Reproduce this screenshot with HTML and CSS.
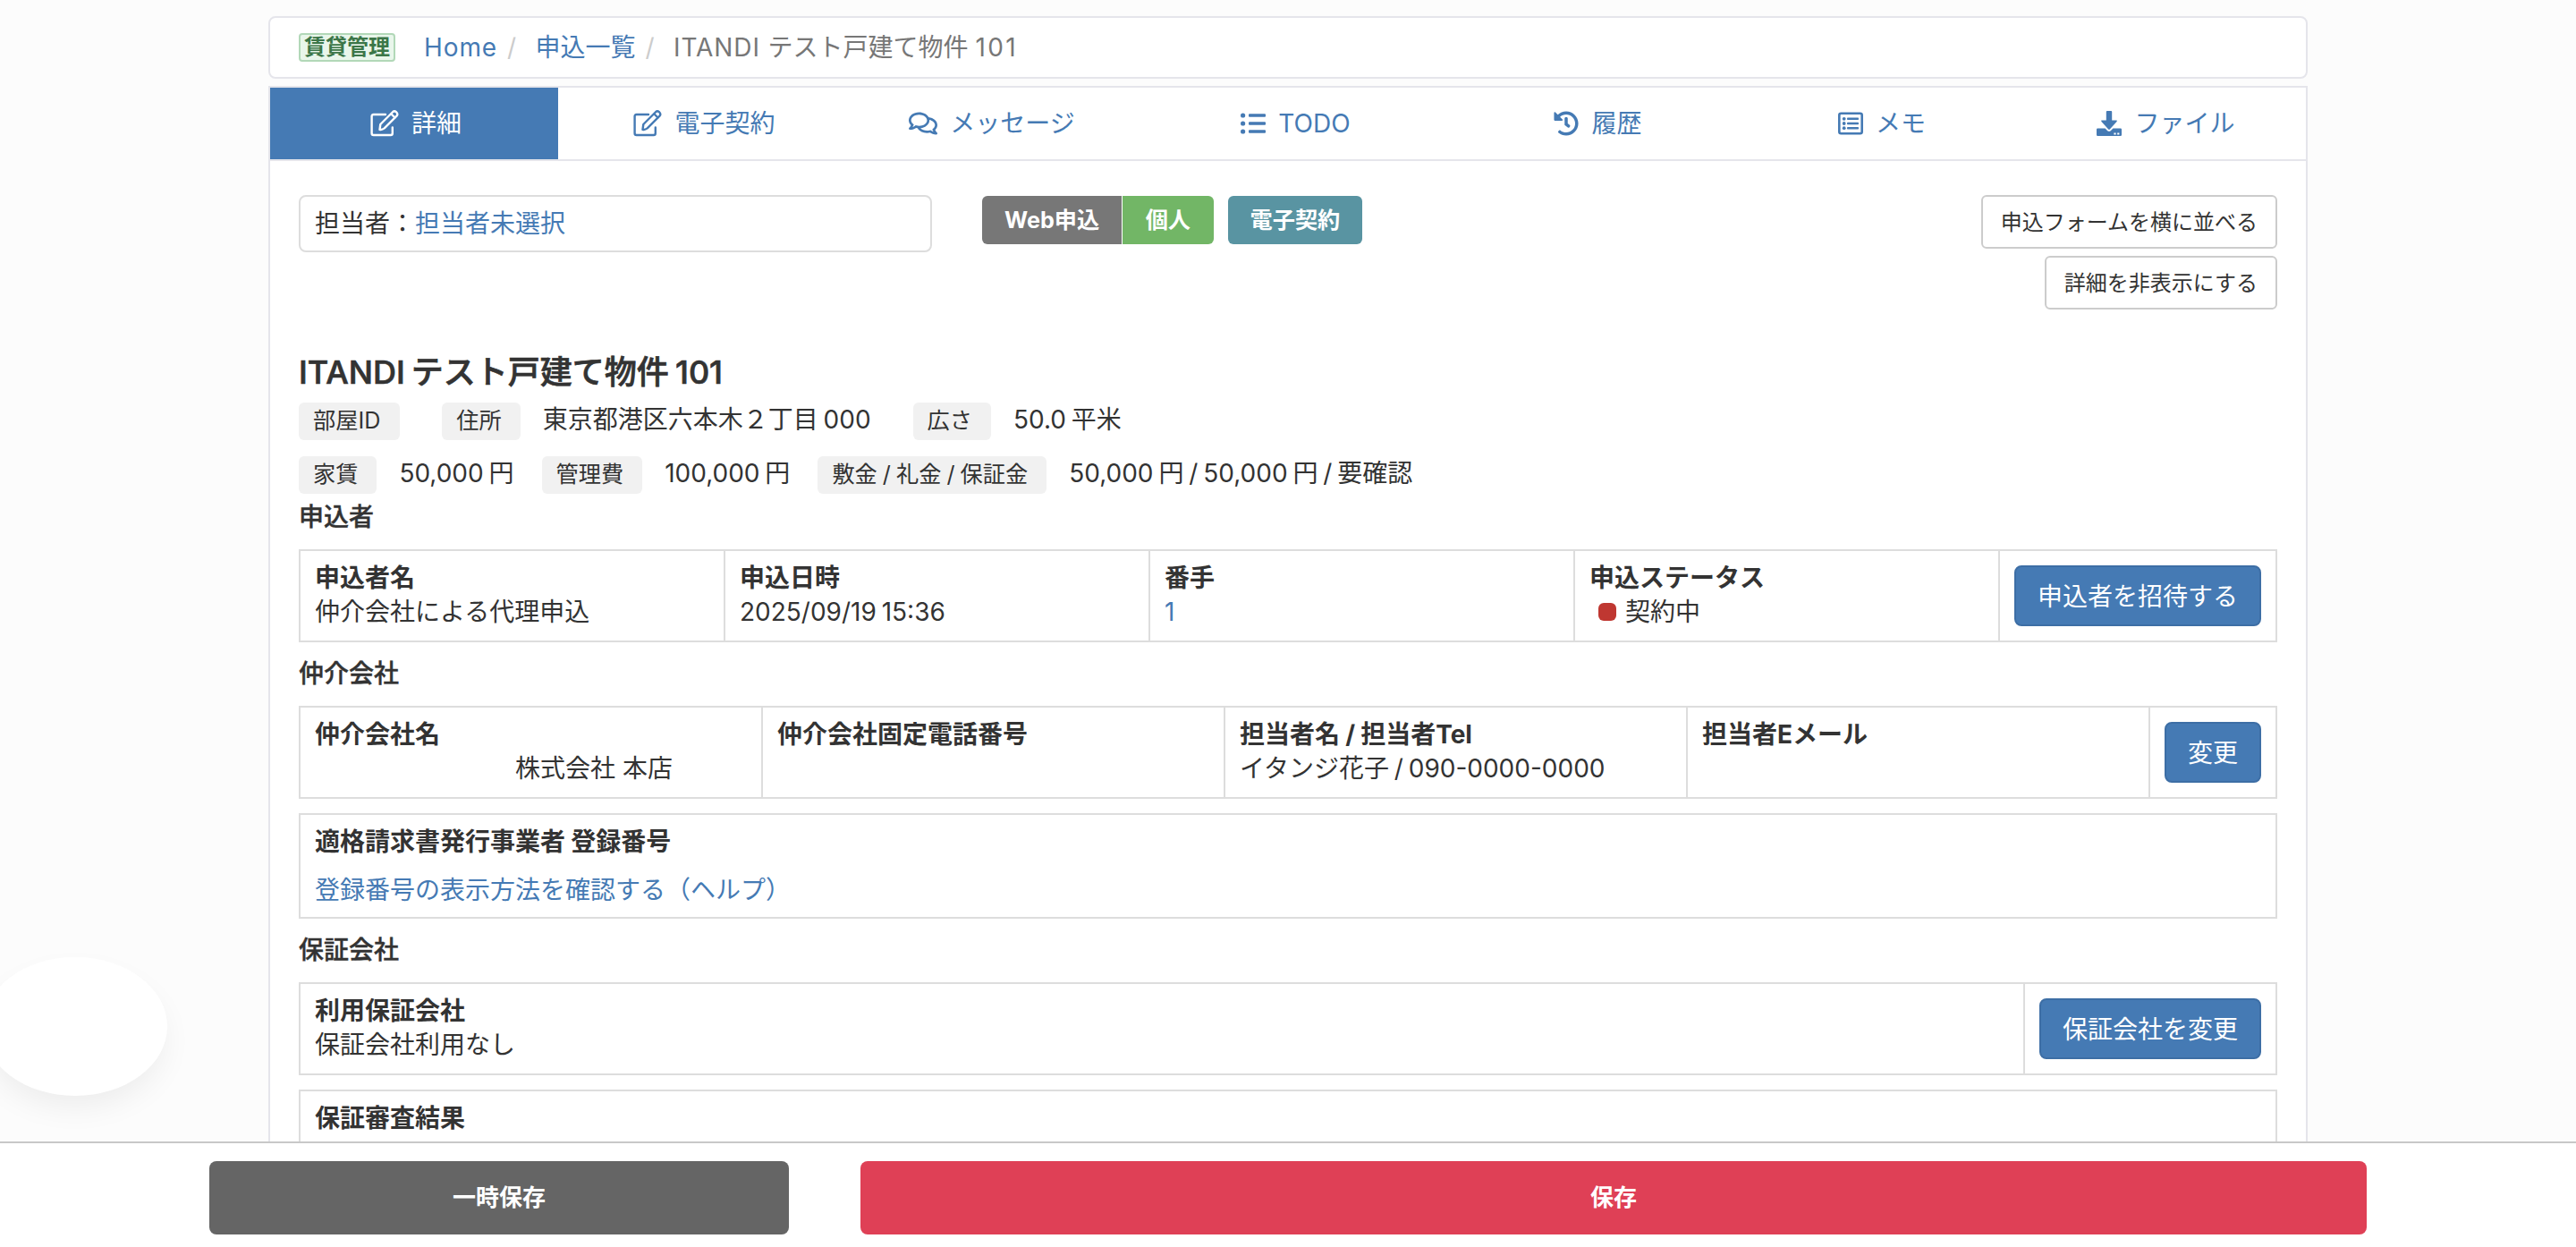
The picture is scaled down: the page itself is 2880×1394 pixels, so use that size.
FILE: index.html
```
<!DOCTYPE html>
<html lang="ja">
<head>
<meta charset="utf-8">
<title>ITANDI テスト戸建て物件 101</title>
<link rel="stylesheet" href="styles.css">
</head>
<body>
<svg width="0" height="0" class="sprite" aria-hidden="true">
  <symbol id="i-edit" viewBox="0 0 32 32">
    <g fill="none" stroke="currentColor" stroke-width="2.4" stroke-linejoin="round" stroke-linecap="round">
      <path d="M17 6H3.600Q1.600 6 1.600 8V27Q1.600 29 3.600 29H22.800Q24.800 29 24.800 27V20.500"/>
      <path d="M10.500 22.800 11.300 17 25.300 3Q27 1.500 28.900 3.200 31.200 5.300 29.700 7.400L15.700 21.400Q13 23.500 10.500 22.800Z"/>
      <path d="M23.500 5.500 27.500 9.500"/>
    </g>
  </symbol>
  <symbol id="i-chat" viewBox="0 0 576 512"><path fill="currentColor" d="M532 386.200c27.500-27.100 44-61.100 44-98.200 0-80-76.500-146.100-176.200-157.900C368.300 72.500 294.300 32 208 32 93.100 32 0 103.600 0 192c0 37 16.500 71 44 98.200-15.300 30.700-37.300 54.500-37.700 54.900-6.300 6.700-8.100 16.500-4.400 25 3.600 8.500 12 14 21.200 14 53.500 0 96.700-20.200 125.200-38.800 9.200 2.100 18.700 3.700 28.400 4.900C208.100 407.600 281.800 448 368 448c20.800 0 40.800-2.400 59.800-6.800C456.300 459.700 499.400 480 553 480c9.200 0 17.500-5.500 21.200-14 3.600-8.500 1.900-18.300-4.400-25-.4-.3-22.500-24.100-37.800-54.800zm-392.800-92.300L122.100 305c-14.100 9.100-28.500 16.300-43.100 21.400 2.700-4.700 5.400-9.700 8-14.800l15.500-31.100L77.700 256C64.200 242.600 48 220.700 48 192c0-60.700 73.300-112 160-112s160 51.300 160 112-73.300 112-160 112c-16.500 0-33-1.900-49-5.600l-19.800-4.500zM498.300 352l-24.700 24.400 15.500 31.100c2.600 5.100 5.300 10.100 8 14.800-14.600-5.100-29-12.300-43.100-21.400l-17.100-11.100-19.900 4.600c-16 3.700-32.500 5.600-49 5.600-54 0-102.200-20.100-131.300-49.700C338 339.500 416 272.900 416 192c0-3.400-.4-6.700-.7-10C479.700 196.500 528 238.800 528 288c0 28.700-16.200 50.600-29.700 64z"/></symbol>
  <symbol id="i-list" viewBox="0 0 28 28"><g fill="currentColor"><rect x="9" y="3.200" width="19" height="3.600" rx="1"/><rect x="9" y="12.200" width="19" height="3.600" rx="1"/><rect x="9" y="21.200" width="19" height="3.600" rx="1"/><circle cx="2.600" cy="5" r="2.600"/><circle cx="2.600" cy="14" r="2.600"/><circle cx="2.600" cy="23" r="2.600"/></g></symbol>
  <symbol id="i-history" viewBox="0 0 512 512"><path fill="currentColor" d="M504 255.500c.3 136.600-111.200 248.400-247.800 248.500-59 0-113.200-20.500-155.800-54.900-11.100-8.900-11.900-25.500-1.800-35.600l11.300-11.300c8.600-8.600 22.400-9.600 31.900-2C173.100 425.100 212.800 440 256 440c101.700 0 184-82.300 184-184 0-101.700-82.300-184-184-184-48.800 0-93.100 19-126.100 49.900l50.800 50.800c10.100 10.100 2.900 27.300-11.300 27.300H24c-8.800 0-16-7.200-16-16V38.600c0-14.300 17.200-21.400 27.300-11.300l49.400 49.400C129.200 34.100 189.600 8 256 8c136.800 0 247.700 110.800 248 247.500zm-180.900 78.800 9.800-12.600c8.100-10.500 6.300-25.500-4.200-33.700L288 256.300V152c0-13.300-10.700-24-24-24h-16c-13.300 0-24 10.700-24 24v135.700l65.400 50.900c10.500 8.100 25.500 6.300 33.700-4.300z"/></symbol>
  <symbol id="i-memo" viewBox="0 0 28 28"><rect x="1.300" y="2.800" width="25.400" height="22.400" rx="2" fill="none" stroke="currentColor" stroke-width="2.600"/><g fill="currentColor"><rect x="10" y="7.500" width="13" height="2.600" rx=".8"/><rect x="10" y="12.700" width="13" height="2.600" rx=".8"/><rect x="10" y="17.900" width="13" height="2.600" rx=".8"/><circle cx="6.700" cy="8.800" r="1.900"/><circle cx="6.700" cy="14" r="1.900"/><circle cx="6.700" cy="19.200" r="1.900"/></g></symbol>
  <symbol id="i-download" viewBox="0 0 28 28"><g fill="currentColor"><path d="M10.800 1Q10.800 0 11.800 0H16.200Q17.200 0 17.200 1V10.600H22Q23.600 10.600 22.500 11.900L14.800 20.500Q14 21.300 13.200 20.500L5.500 11.900Q4.400 10.600 6 10.600H10.800Z"/><path fill-rule="evenodd" d="M1.200 19.600H9.600L12 22Q14 23.700 16 22L18.400 19.600H26.800Q28 19.600 28 20.800V26.800Q28 28 26.800 28H1.200Q0 28 0 26.800V20.800Q0 19.600 1.200 19.600ZM19.400 24.400H21.600V26.400H19.400ZM23.200 24.400H25.400V26.400H23.200Z"/></g></symbol>
</svg>

<nav class="breadcrumb">
  <span class="tag-green">賃貸管理</span>
  <a class="latin">Home</a><span class="sep">/</span><a>申込一覧</a><span class="sep">/</span><span class="crumb-current"><span class="latin">ITANDI </span>テスト戸建て物件 <span class="digits">101</span></span>
</nav>

<main class="panel">
  <nav class="tabs">
    <a class="tab active"><svg class="icon icon-wide"><use href="#i-edit"/></svg>詳細</a>
    <a class="tab"><svg class="icon icon-wide"><use href="#i-edit"/></svg>電子契約</a>
    <a class="tab"><svg class="icon icon-wide"><use href="#i-chat"/></svg>メッセージ</a>
    <a class="tab"><svg class="icon"><use href="#i-list"/></svg>TODO</a>
    <a class="tab"><svg class="icon"><use href="#i-history"/></svg>履歴</a>
    <a class="tab"><svg class="icon"><use href="#i-memo"/></svg>メモ</a>
    <a class="tab"><svg class="icon"><use href="#i-download"/></svg>ファイル</a>
  </nav>
  <div class="content">
    <div class="top-row">
      <div class="assignee">担当者：<a>担当者未選択</a></div>
      <div class="labels">
        <span class="label gray">Web申込</span>
        <span class="label green">個人</span>
        <span class="label teal">電子契約</span>
      </div>
      <div class="actions">
        <button class="btn-outline">申込フォームを横に並べる</button>
        <button class="btn-outline">詳細を非表示にする</button>
      </div>
    </div>

    <h1 class="title">ITANDI テスト戸建て物件 101</h1>
    <div class="facts first">
      <span class="key room">部屋ID</span>
      <span class="key">住所</span><span class="val address">東京都港区六本木２丁目 000</span>
      <span class="key">広さ</span><span class="val">50.0 平米</span>
    </div>
    <div class="facts second">
      <span class="key">家賃</span><span class="val">50,000 円</span>
      <span class="key">管理費</span><span class="val">100,000 円</span>
      <span class="key">敷金 / 礼金 / 保証金</span><span class="val">50,000 円 / 50,000 円 / 要確認</span>
    </div>

    <h2 class="section first-section">申込者</h2>
    <div class="grid-box">
      <div class="cell"><b>申込者名</b><span>仲介会社による代理申込</span></div>
      <div class="cell"><b>申込日時</b><span>2025/09/19 15:36</span></div>
      <div class="cell"><b>番手</b><a>1</a></div>
      <div class="cell"><b>申込ステータス</b><span class="status"><i class="dot"></i>契約中</span></div>
      <div class="cell-action"><button class="btn">申込者を招待する</button></div>
    </div>

    <h2 class="section">仲介会社</h2>
    <div class="grid-box">
      <div class="cell"><b>仲介会社名</b><span class="company">株式会社 本店</span></div>
      <div class="cell"><b>仲介会社固定電話番号</b></div>
      <div class="cell"><b>担当者名 / 担当者Tel</b><span>イタンジ花子 / 090-0000-0000</span></div>
      <div class="cell"><b>担当者Eメール</b></div>
      <div class="cell-action"><button class="btn">変更</button></div>
    </div>
    <div class="grid-box invoice">
      <div class="cell"><b>適格請求書発行事業者 登録番号</b><a>登録番号の表示方法を確認する（ヘルプ）</a></div>
    </div>

    <h2 class="section">保証会社</h2>
    <div class="grid-box">
      <div class="cell"><b>利用保証会社</b><span>保証会社利用なし</span></div>
      <div class="cell-action"><button class="btn">保証会社を変更</button></div>
    </div>
    <div class="grid-box stacked">
      <div class="cell"><b>保証審査結果</b></div>
    </div>
  </div>
</main>

<div class="bubble"></div>
<footer class="save-bar">
  <button class="save draft">一時保存</button>
  <button class="save submit">保存</button>
</footer>
</body>
</html>
```
FILE: styles.css
```
* { box-sizing: border-box; }
body {
  margin: 0;
  padding-top: 18px;
  height: 1394px;
  overflow: hidden;
  background: #fcfcfc;
  color: #333;
  font: 28px/40px Inter, "Noto Sans CJK JP", sans-serif;
  word-spacing: -2px;
}
a { color: #457ab4; text-decoration: none; }
b { word-spacing: -.5px; }
button { font-family: inherit; margin: 0; white-space: nowrap; }
.sprite { position: absolute; }

.breadcrumb {
  display: flex;
  align-items: center;
  width: 2280px;
  height: 70px;
  margin: 0 auto 8px;
  padding: 0 32px;
  background: #fff;
  border: 2px solid #e5e5eb;
  border-radius: 8px;
  white-space: nowrap;
  word-spacing: 0;
}
.tag-green {
  height: 32px;
  margin-right: 32px;
  padding: 0 4px;
  border: 2px solid #b2d8b8;
  border-radius: 4px;
  background: #e9f6eb;
  color: #3c7648;
  font-size: 24px;
  font-weight: 700;
  line-height: 27px;
}
.latin { letter-spacing: .9px; white-space: pre; }
.digits { letter-spacing: 2.3px; }
.sep { width: 42.500px; padding-left: 11px; color: #ccc; }
.crumb-current { color: #777; }

.panel {
  width: 2280px;
  height: 1298px;
  margin: 0 auto;
  background: #fff;
  border: 2px solid #e5e5eb;
}
.tabs {
  display: grid;
  grid-template-columns: 322px 325px 318px 361px 315px 320px 315px;
  height: 82px;
  border-bottom: 2px solid #e5e5eb;
}
.tab {
  display: flex;
  align-items: center;
  justify-content: center;
  gap: 14px;
  padding-left: 2px;
}
.tab.active { padding-left: 4px; background: #457ab4; color: #fff; }
.icon { width: 28px; height: 28px; }
.icon-wide { width: 32px; height: 32px; }

.content { padding: 38px 32px 0; }
.top-row { display: flex; height: 168px; align-items: flex-start; }
.assignee {
  width: 708px;
  height: 64px;
  padding: 0 16px;
  border: 2px solid #ddd;
  border-radius: 8px;
  line-height: 60px;
}
.labels { display: flex; margin: 1px 0 0 56px; }
.label {
  height: 54px;
  padding: 0 25px;
  color: #fff;
  font-size: 25.2px;
  font-weight: 700;
  line-height: 55px;
}
.gray { background: #777; border-radius: 6px 0 0 6px; margin-right: 1px; }
.green { background: #72b666; border-radius: 0 6px 6px 0; margin-right: 16px; padding: 0 25.500px; }
.teal { background: #5994a2; border-radius: 6px; }
.actions { display: flex; flex-direction: column; align-items: flex-end; gap: 8px; margin-left: auto; }
.btn-outline {
  height: 60px;
  padding: 0 20px 3px;
  border: 2px solid #ccc;
  border-radius: 6px;
  background: #fff;
  color: #333;
  font-size: 24px;
}

.title {
  margin: 8px 0 0;
  height: 56px;
  font-size: 36px;
  font-weight: 500;
  line-height: 44px;
  word-spacing: -2.500px;
  -webkit-text-stroke: .7px #333;
}
.facts { display: flex; height: 42px; white-space: nowrap; }
.facts.second { margin-top: 18px; }
.key {
  height: 42px;
  margin-right: 25px;
  padding: 0 21px 0 16px;
  border-radius: 6px;
  background: #f1f1f1;
  font-size: 25.2px;
  line-height: 40px;
  word-spacing: -1px;
}
.key.room { margin-right: 47px; padding-right: 22px; }
.val { margin-right: 31px; line-height: 39px; }
.val.address { margin-right: 47px; }

.section {
  margin: 0;
  height: 71px;
  padding-top: 15px;
  font-size: 28px;
  font-weight: 500;
  line-height: 40px;
  -webkit-text-stroke: .4px #333;
}
.first-section { height: 62px; padding-top: 6px; }
.grid-box { display: flex; height: 104px; border: 2px solid #ddd; }
.cell {
  display: flex;
  flex: 1 1 0;
  flex-direction: column;
  padding: 11px 16px 0;
  border-right: 2px solid #ddd;
  line-height: 38px;
}
.cell:last-child { border-right: 0; }
.cell-action { padding: 16px; }
.btn {
  display: block;
  height: 68px;
  padding: 0 24px 3px;
  border: 2px solid #3d6ea5;
  border-radius: 8px;
  background: #457ab4;
  color: #fff;
  font-size: 28px;
}
.status { display: flex; align-items: center; }
.dot { width: 20px; height: 20px; margin: 0 10px; border-radius: 6px; background: #bf3731; }
.company { padding-left: 224px; word-spacing: 0; }
.invoice { height: 118px; margin-top: 16px; }
.invoice a { margin-top: 16px; }
.stacked { margin-top: 16px; }

.bubble {
  position: fixed;
  left: -19px;
  top: 1070px;
  width: 206px;
  height: 155px;
  border-radius: 50%;
  background: #fff;
  box-shadow: 0 16px 36px -6px rgba(0, 0, 0, .07);
}
.save-bar {
  position: fixed;
  inset: auto 0 0 0;
  display: flex;
  gap: 80px;
  height: 118px;
  padding: 20px 234px 0;
  border-top: 2px solid #c8c8c8;
  background: #fff;
}
.save {
  height: 82px;
  padding-bottom: 6px;
  border: 0;
  border-radius: 8px;
  color: #fff;
  font-size: 26px;
  font-weight: 700;
}
.draft { width: 648px; background: #656565; }
.submit { flex: 1; background: #df4056; }
```
